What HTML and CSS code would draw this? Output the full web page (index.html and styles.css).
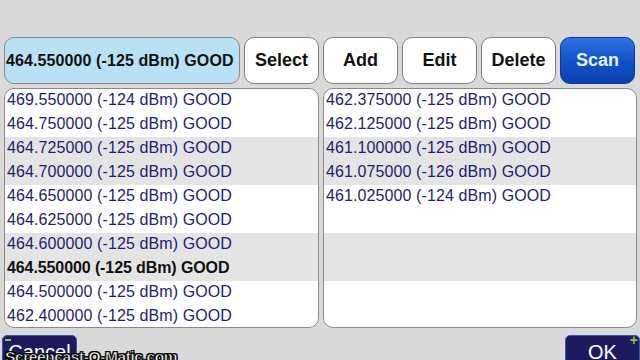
FILE: index.html
```
<!DOCTYPE html>
<html>
<head>
<meta charset="utf-8">
<link rel="stylesheet" href="styles.css">
</head>
<body>
<div class="screen">
  <div class="toolbar">
    <div class="current">464.550000 (-125 dBm) GOOD</div>
    <button class="btn">Select</button>
    <button class="btn">Add</button>
    <button class="btn">Edit</button>
    <button class="btn">Delete</button>
    <button class="btn scan">Scan</button>
  </div>
  <div class="lists">
    <div class="list">
      <div class="row">469.550000 (-124 dBm) GOOD</div>
      <div class="row">464.750000 (-125 dBm) GOOD</div>
      <div class="row alt">464.725000 (-125 dBm) GOOD</div>
      <div class="row alt">464.700000 (-125 dBm) GOOD</div>
      <div class="row">464.650000 (-125 dBm) GOOD</div>
      <div class="row">464.625000 (-125 dBm) GOOD</div>
      <div class="row alt">464.600000 (-125 dBm) GOOD</div>
      <div class="row alt sel">464.550000 (-125 dBm) GOOD</div>
      <div class="row">464.500000 (-125 dBm) GOOD</div>
      <div class="row">462.400000 (-125 dBm) GOOD</div>
    </div>
    <div class="list">
      <div class="row">462.375000 (-125 dBm) GOOD</div>
      <div class="row">462.125000 (-125 dBm) GOOD</div>
      <div class="row alt">461.100000 (-125 dBm) GOOD</div>
      <div class="row alt">461.075000 (-126 dBm) GOOD</div>
      <div class="row">461.025000 (-124 dBm) GOOD</div>
      <div class="row"></div>
      <div class="row alt"></div>
      <div class="row alt"></div>
      <div class="row"></div>
      <div class="row"></div>
    </div>
  </div>
  <div class="footer">
    <div class="nav cancel"><span class="minus"></span>Cancel</div>
    <div class="nav ok"><span class="plus">+</span>OK</div>
  </div>
  <div class="watermark">Screencast-O-Matic.com</div>
</div>
</body>
</html>
```
FILE: styles.css
```
html, body {
  margin: 0;
  padding: 0;
  width: 640px;
  height: 360px;
  overflow: hidden;
  background: #d9d9d9;
  font-family: "Liberation Sans", Arial, sans-serif;
}
.screen {
  position: relative;
  width: 640px;
  height: 360px;
  padding-top: 37px;
  box-sizing: border-box;
}
.toolbar {
  display: flex;
  gap: 4px;
  padding-left: 4px;
  height: 47px;
}
.current {
  width: 236px;
  box-sizing: border-box;
  background: #b9e1f5;
  border: 1px solid #8a8a8a;
  border-radius: 10px;
  font-weight: bold;
  font-size: 16px;
  letter-spacing: 0.1px;
  color: #111;
  display: flex;
  align-items: center;
  padding-left: 1px;
  white-space: nowrap;
}
.btn {
  width: 75px;
  box-sizing: border-box;
  background: #fff;
  border: 1px solid #808080;
  border-radius: 10px;
  font-family: "Liberation Sans", Arial, sans-serif;
  font-weight: bold;
  font-size: 18px;
  color: #111;
  padding: 0;
}
.btn.scan {
  background: linear-gradient(#2f74e6, #1352c9 50%, #0b3fb0);
  border-color: #0d3a9a;
  color: #e6f2ff;
}
.lists {
  display: grid;
  grid-template-columns: 315px 314px;
  gap: 4px;
  padding-left: 4px;
  margin-top: 4px;
}
.list {
  background: #fff;
  border: 1px solid #8a8a8a;
  border-radius: 10px;
  overflow: hidden;
  height: 240px;
  box-sizing: border-box;
}
.row {
  height: 24px;
  line-height: 21px;
  font-size: 16px;
  letter-spacing: 0.1px;
  color: #1e1e6e;
  padding-left: 2px;
  white-space: nowrap;
}
.row.alt {
  background: #e4e4e4;
}
.row.sel {
  color: #111;
  font-weight: bold;
  letter-spacing: -0.1px;
}
.footer {
  display: flex;
  justify-content: space-between;
  padding-left: 2px;
  margin-top: 7px;
}
.nav {
  position: relative;
  width: 75px;
  height: 40px;
  box-sizing: border-box;
  background: #1d1b5f;
  border: 1px solid #3a5aa0;
  border-radius: 5px 5px 0 0;
  color: #fff;
  font-size: 20px;
  text-align: center;
  padding-top: 5px;
}
.minus {
  position: absolute;
  left: 2px;
  top: 3px;
  width: 6px;
  height: 2px;
  background: #8cc63f;
}
.plus {
  position: absolute;
  right: 1px;
  top: -4px;
  color: #8cc63f;
  font-weight: bold;
  font-size: 14px;
}
.watermark {
  position: absolute;
  left: 5px;
  top: 348px;
  font-weight: bold;
  font-size: 15.5px;
  color: #fff;
  letter-spacing: -0.4px;
  -webkit-text-stroke: 0.6px #000;
  text-shadow: 1px 1px 0 #000, -1px -1px 0 #000, 1px -1px 0 #000, -1px 1px 0 #000;
}
```
